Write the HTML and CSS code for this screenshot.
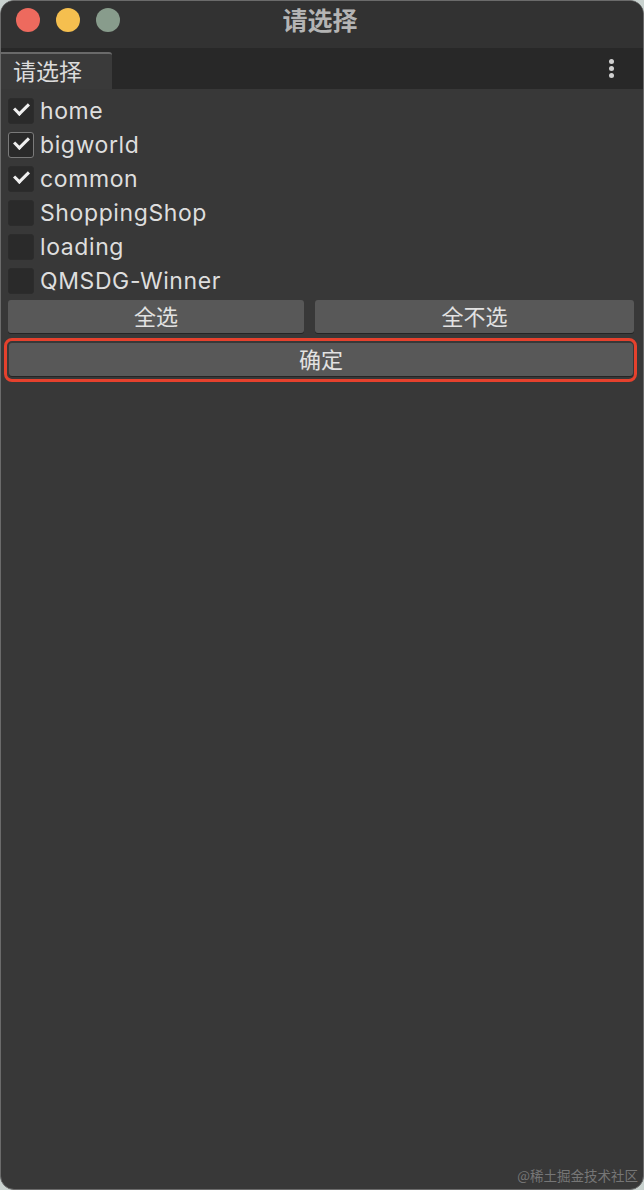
FILE: index.html
```html
<!DOCTYPE html>
<html lang="zh-CN">

<head>
    <meta charset="UTF-8">
    <meta name="viewport" content="width=device-width, initial-scale=1.0">
    <title>请选择</title>
    <link rel="stylesheet" href="styles.css">
</head>

<body>
    <div class="window">
        <div class="titlebar">
            <div class="lights">
                <span class="light red"></span>
                <span class="light yellow"></span>
                <span class="light green"></span>
            </div>
            <div class="title">请选择</div>
        </div>

        <div class="tabstrip">
            <div class="tab">请选择</div>
            <div class="menu">
                <span></span><span></span><span></span>
            </div>
        </div>

        <div class="content">
            <ul class="toggle-list">
                <li class="toggle checked"><span class="box"></span>home</li>
                <li class="toggle checked focus"><span class="box"></span>bigworld</li>
                <li class="toggle checked"><span class="box"></span>common</li>
                <li class="toggle"><span class="box"></span>ShoppingShop</li>
                <li class="toggle"><span class="box"></span>loading</li>
                <li class="toggle"><span class="box"></span>QMSDG-Winner</li>
            </ul>

            <div class="button-row">
                <button class="btn">全选</button>
                <button class="btn">全不选</button>
            </div>

            <div class="highlight">
                <button class="btn btn-wide">确定</button>
            </div>
        </div>

        <div class="watermark">@稀土掘金技术社区</div>
    </div>
</body>

</html>
```

FILE: styles.css
```css
body {
    margin: 0;
    padding: 0;
    background-color: #c9d2cf;
    font-family: Inter, "Noto Sans CJK SC", sans-serif;
}

.window {
    position: relative;
    height: 1188px;
    background-color: #383838;
    border: 1px solid #6b6b6b;
    border-radius: 14px;
    overflow: hidden;
}

.titlebar {
    position: relative;
    height: 47px;
    background-color: #323232;
    display: flex;
    align-items: center;
    justify-content: center;
}

.lights {
    position: absolute;
    left: 15px;
    top: 7px;
    display: flex;
    gap: 16px;
}

.light {
    width: 24px;
    height: 24px;
    border-radius: 50%;
}

.red {
    background-color: #ed6a5e;
}

.yellow {
    background-color: #f5bf4f;
}

.green {
    background-color: #889c8c;
}

.title {
    margin-top: -12px;
    margin-left: -4px;
    font-family: "Noto Sans CJK SC", sans-serif;
    font-size: 25px;
    font-weight: bold;
    color: #b4b4b4;
}

.tabstrip {
    height: 41px;
    background-color: #282828;
    display: flex;
    align-items: flex-end;
    justify-content: space-between;
}

.tab {
    width: 99px;
    height: 35px;
    padding-left: 12px;
    border-top: 2px solid #6a6a6a;
    border-top-right-radius: 3px;
    background-color: #3a3a3a;
    font-family: "Noto Sans CJK SC", sans-serif;
    font-size: 23px;
    line-height: 33px;
    color: #dcdcdc;
}

.menu {
    align-self: center;
    display: flex;
    flex-direction: column;
    gap: 2px;
    margin-right: 29px;
}

.menu span {
    width: 5px;
    height: 5px;
    border-radius: 50%;
    background-color: #d0d0d0;
}

.content {
    padding: 5px 6px 0 6px;
}

.toggle-list {
    list-style: none;
    margin: 0;
    padding: 0;
}

.toggle {
    height: 34px;
    display: flex;
    align-items: center;
    gap: 6px;
    font-size: 23px;
    letter-spacing: 0.6px;
    color: #dedede;
}

.box {
    position: relative;
    width: 24px;
    height: 24px;
    margin-left: 1px;
    border: 1px solid #2c2c2c;
    border-radius: 3px;
    background-color: #2a2a2a;
}

.toggle.focus .box {
    border-color: #7a7a7a;
}

.toggle.checked .box::after {
    content: "";
    position: absolute;
    left: 5px;
    top: 4px;
    width: 12px;
    height: 6px;
    border-left: 3px solid #f0f0f0;
    border-bottom: 3px solid #f0f0f0;
    transform: rotate(-45deg);
}

.button-row {
    display: grid;
    grid-template-columns: 296px 1fr;
    gap: 11px;
    margin: 2px 3px 0 1px;
}

.btn {
    height: 33px;
    padding: 0 0 3px 0;
    border: none;
    border-radius: 3px;
    background-color: #585858;
    box-shadow: 0 1px 0 #242424;
    font-family: "Noto Sans CJK SC", sans-serif;
    font-size: 22px;
    line-height: 30px;
    color: #e2e2e2;
}

.highlight {
    margin: 5px 0 0 -3px;
    padding: 2px 1px 3px 2px;
    border: 3px solid #e5412d;
    border-radius: 8px;
}

.btn-wide {
    display: block;
    width: 100%;
}

.watermark {
    position: absolute;
    right: 5px;
    bottom: 4px;
    font-family: "Noto Sans CJK SC", sans-serif;
    font-size: 13.5px;
    color: #767676;
}
```
